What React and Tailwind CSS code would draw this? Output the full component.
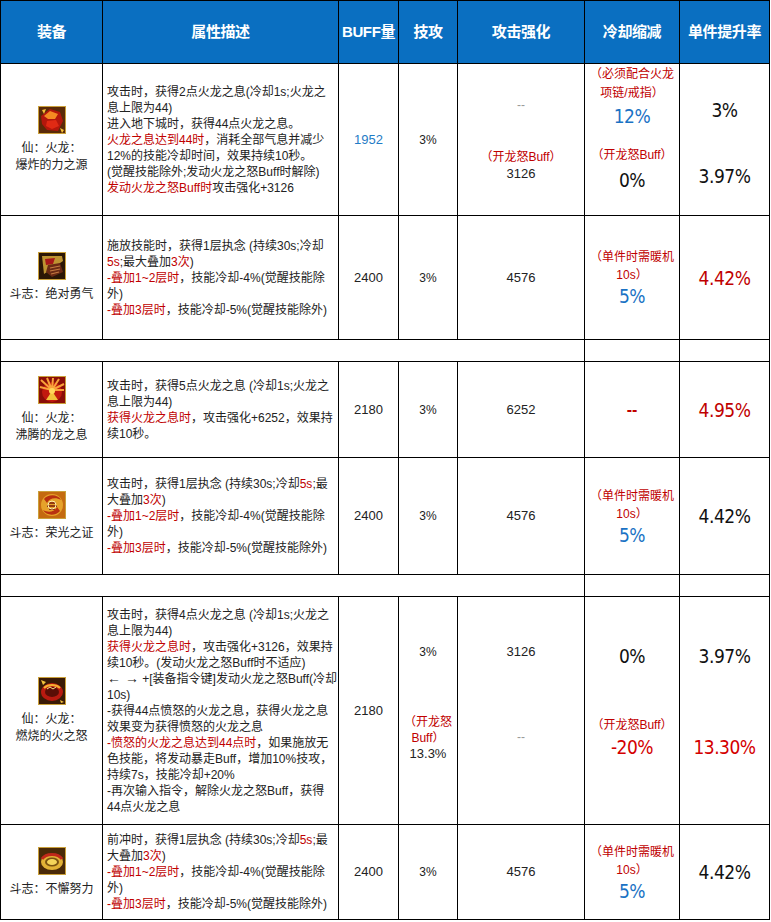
import React from 'react'

const FONT = { fontFamily: '"Liberation Sans","Noto Sans CJK SC",sans-serif' }
const BIG = 'font-[family-name:"DejaVu_Sans_Condensed","Liberation_Sans",sans-serif] text-[19px] leading-[22px] h-[22px] tracking-[-0.5px]'
const COLS = 'grid grid-cols-[102px_236px_60px_59px_127px_95px_90px]'
const CELL = 'border-r border-b border-black flex flex-col items-center justify-center text-center'

function R({ children }) {
  return <span className="text-[#c00000]">{children}</span>
}

function Desc({ lines }) {
  return (
    <div className="border-r border-b border-black flex flex-col justify-center pl-[4px] text-[12px] leading-[16px] text-[#222] overflow-hidden">
      {lines.map((l, i) => (
        <div key={i} className="whitespace-nowrap h-[16px]">{l}</div>
      ))}
    </div>
  )
}

function Frame({ children, bg }) {
  return (
    <svg width="28" height="28" viewBox="0 0 28 28" className="mb-[6px]">
      <rect width="28" height="28" fill={bg} />
      {children}
      <rect x="0.5" y="0.5" width="27" height="27" fill="none" stroke="#caa03a" />
    </svg>
  )
}

function IconBlast() {
  return (
    <Frame bg="#5a2a08">
      <path d="M3 10 L12 3 L22 6 L25 15 L20 25 L9 24 L4 18 Z" fill="#b3170c" />
      <path d="M6 10 L12 5 L20 8 L17 13 L10 13 Z" fill="#f58a22" />
      <path d="M9 15 L18 14 L21 20 L14 23 L8 20 Z" fill="#e02a14" />
      <path d="M4 4 L8 3 L6 8 Z M22 22 L26 24 L24 27 Z" fill="#f7c13a" />
    </Frame>
  )
}

function IconCourage() {
  return (
    <Frame bg="#2b1605">
      <path d="M4 4 L24 4 L25 9 L6 22 Z" fill="#d8a93a" opacity="0.85" />
      <path d="M7 7 L17 6 L15 12 L8 13 Z" fill="#a81818" />
      <path d="M10 13 L22 11 L25 20 L14 25 L8 20 Z" fill="#6b2a14" />
      <path d="M12 16 L22 14 M12 19 L22 17 M13 22 L21 20" stroke="#c47a40" strokeWidth="1.2" />
    </Frame>
  )
}

function IconBreath() {
  return (
    <Frame bg="#8a0e08">
      <circle cx="14" cy="16" r="10" fill="#c21a0e" />
      <path d="M14 14 L3 4 M14 14 L9 2 M14 14 L15 2 M14 14 L21 3 M14 14 L26 8 M14 14 L2 11 M14 14 L26 14" stroke="#f9a23a" strokeWidth="2" />
      <path d="M8 24 L14 15 L20 24 Z" fill="#f2c23c" />
      <circle cx="14" cy="15" r="3" fill="#ffd65a" />
    </Frame>
  )
}

function IconGlory() {
  return (
    <Frame bg="#c46a10">
      <circle cx="14" cy="14" r="11" fill="#e6a22a" />
      <path d="M6 8 C10 3 20 3 23 9 C18 6 11 7 9 12 Z" fill="#b83010" />
      <path d="M22 20 C18 25 8 25 5 19 C10 22 17 21 19 16 Z" fill="#b83010" />
      <path d="M10 12 L18 12 M9 15 L19 15 M11 18 L17 18" stroke="#7a1a08" strokeWidth="1.5" />
      <circle cx="14" cy="14" r="4" fill="none" stroke="#fff2b0" strokeWidth="1" />
    </Frame>
  )
}

function IconRage() {
  return (
    <Frame bg="#3a1a06">
      <ellipse cx="14" cy="15" rx="11" ry="9" fill="#b81a10" />
      <ellipse cx="14" cy="15" rx="7" ry="5" fill="#5a0e06" />
      <path d="M6 11 C10 7 18 7 22 11" stroke="#f6b030" strokeWidth="2" fill="none" />
      <path d="M9 12 L12 10 L15 12 L18 10" stroke="#ffe08a" strokeWidth="1" fill="none" />
      <path d="M3 3 L8 5 L5 8 Z M22 23 L26 25 L23 26 Z" fill="#f2c23c" />
    </Frame>
  )
}

function IconEffort() {
  return (
    <Frame bg="#4a2a08">
      <ellipse cx="14" cy="15" rx="11" ry="8" fill="#e2b236" />
      <ellipse cx="14" cy="15" rx="7" ry="4.5" fill="#7a5210" />
      <path d="M4 12 C8 6 20 6 24 12" stroke="#c0281a" strokeWidth="3" fill="none" />
      <ellipse cx="14" cy="15" rx="5" ry="3" fill="#f4d45a" />
    </Frame>
  )
}

function Name({ icon, lines }) {
  return (
    <div className={CELL + ' text-[12px] leading-[17px] text-[#222]'}>
      {icon}
      {lines.map((l) => (
        <div key={l} className="whitespace-nowrap">{l}</div>
      ))}
    </div>
  )
}

function Val({ children, className = 'text-[13px] text-[#222]' }) {
  return <div className={CELL + ' ' + className}>{children}</div>
}

const dash = <span className="text-[#c00000]">-</span>

export default function App() {
  return (
    <div className="w-[771px] h-[922px] bg-white overflow-hidden" style={FONT}>
      <div className="w-[770px] border-l border-t border-black">
        <div className={COLS + ' h-[63px] bg-[#0a6fc1] text-white font-bold text-[15px]'}>
          {['装备', '属性描述', 'BUFF量', '技攻', '攻击强化', '冷却缩减', '单件提升率'].map((h) => (
            <div key={h} className={CELL + ' whitespace-nowrap tracking-[-0.4px]'}>{h}</div>
          ))}
        </div>

        {/* 爆炸的力之源 */}
        <div className={COLS + ' h-[152px]'}>
          <Name icon={<IconBlast />} lines={['仙：火龙：', '爆炸的力之源']} />
          <Desc
            lines={[
              '攻击时，获得2点火龙之息(冷却1s;火龙之',
              '息上限为44)',
              '进入地下城时，获得44点火龙之息。',
              <><R>火龙之息达到44时</R>，消耗全部气息并减少</>,
              '12%的技能冷却时间，效果持续10秒。',
              '(觉醒技能除外;发动火龙之怒Buff时解除)',
              <><R>发动火龙之怒Buff时</R>攻击强化+3126</>,
            ]}
          />
          <Val className="text-[13px] text-[#1f7cc6]">1952</Val>
          <Val className="text-[12px] text-[#222]">3%</Val>
          <div className={CELL + ' !justify-start pt-[33px] text-[12px] leading-[16px]'}>
            <div className="text-[#999]">--</div>
            <div className="mt-[36px] text-[#c00000]">（开龙怒Buff）</div>
            <div className="text-[13px] leading-[18px] text-[#222]">3126</div>
          </div>
          <div className={CELL + ' !justify-start pt-[1px] text-[12px] leading-[19px] text-[#c00000]'}>
            <div className="whitespace-nowrap">（必须配合火龙</div>
            <div className="whitespace-nowrap">项链/戒指）</div>
            <div className={BIG + ' mt-[2px] text-[#1a72c4]'}>12%</div>
            <div className="mt-[20px] leading-[16px] whitespace-nowrap">（开龙怒Buff）</div>
            <div className={BIG + ' mt-[6px] text-[#111]'}>0%</div>
          </div>
          <div className={CELL + ' !justify-start pt-[35px] text-[#111]'}>
            <div className={BIG}>3%</div>
            <div className={BIG + ' mt-[44px]'}>3.97%</div>
          </div>
        </div>

        {/* 绝对勇气 */}
        <div className={COLS + ' h-[124px]'}>
          <Name icon={<IconCourage />} lines={['斗志：绝对勇气']} />
          <Desc
            lines={[
              '施放技能时，获得1层执念 (持续30s;冷却',
              <><R>5s</R>;最大叠加<R>3次</R>)</>,
              <>{dash}<R>叠加1~2层时</R>，技能冷却-4%(觉醒技能除</>,
              '外)',
              <>{dash}<R>叠加3层时</R>，技能冷却-5%(觉醒技能除外)</>,
            ]}
          />
          <Val>2400</Val>
          <Val className="text-[12px] text-[#222]">3%</Val>
          <Val>4576</Val>
          <Cool />
          <Val className="text-[#c00000]"><div className={BIG}>4.42%</div></Val>
        </div>

        <Spacer />

        {/* 沸腾的龙之息 */}
        <div className={COLS + ' h-[96px]'}>
          <Name icon={<IconBreath />} lines={['仙：火龙：', '沸腾的龙之息']} />
          <Desc
            lines={[
              '攻击时，获得5点火龙之息 (冷却1s;火龙之',
              '息上限为44)',
              <><R>获得火龙之息时</R>，攻击强化+6252，效果持</>,
              '续10秒。',
            ]}
          />
          <Val>2180</Val>
          <Val className="text-[12px] text-[#222]">3%</Val>
          <Val>6252</Val>
          <Val className="text-[#c00000] font-bold text-[16px]">--</Val>
          <Val className="text-[#c00000]"><div className={BIG}>4.95%</div></Val>
        </div>

        {/* 荣光之证 */}
        <div className={COLS + ' h-[117px]'}>
          <Name icon={<IconGlory />} lines={['斗志：荣光之证']} />
          <Desc
            lines={[
              <>攻击时，获得1层执念 (持续30s;冷却<R>5s</R>;最</>,
              <>大叠加<R>3次</R>)</>,
              <>{dash}<R>叠加1~2层时</R>，技能冷却-4%(觉醒技能除</>,
              '外)',
              <>{dash}<R>叠加3层时</R>，技能冷却-5%(觉醒技能除外)</>,
            ]}
          />
          <Val>2400</Val>
          <Val className="text-[12px] text-[#222]">3%</Val>
          <Val>4576</Val>
          <Cool />
          <Val className="text-[#111]"><div className={BIG}>4.42%</div></Val>
        </div>

        <Spacer />

        {/* 燃烧的火之怒 */}
        <div className={COLS + ' h-[228px]'}>
          <Name icon={<IconRage />} lines={['仙：火龙：', '燃烧的火之怒']} />
          <Desc
            lines={[
              '攻击时，获得4点火龙之息 (冷却1s;火龙之',
              '息上限为44)',
              <><R>获得火龙之息时</R>，攻击强化+3126，效果持</>,
              '续10秒。(发动火龙之怒Buff时不适应)',
              <><span className="text-[14px] leading-[14px]">← →</span> +[装备指令键]发动火龙之怒Buff(冷却</>,
              '10s)',
              '-获得44点愤怒的火龙之息，获得火龙之息',
              '效果变为获得愤怒的火龙之息',
              <><R>-愤怒的火龙之息达到44点时</R>，如果施放无</>,
              '色技能，将发动暴走Buff，增加10%技攻，',
              '持续7s，技能冷却+20%',
              '-再次输入指令，解除火龙之怒Buff，获得',
              '44点火龙之息',
            ]}
          />
          <Val>2180</Val>
          <div className={CELL + ' !justify-start pt-[47px] text-[12px] leading-[16px] text-[#222]'}>
            <div>3%</div>
            <div className="mt-[54px] text-[#c00000]">（开龙怒</div>
            <div className="text-[#c00000]">Buff）</div>
            <div className="text-[13px]">13.3%</div>
          </div>
          <div className={CELL + ' !justify-start pt-[47px] text-[13px] leading-[16px] text-[#222]'}>
            <div>3126</div>
            <div className="mt-[69px] text-[12px] text-[#999]">--</div>
          </div>
          <div className={CELL + ' !justify-start pt-[48px] text-[12px] leading-[16px]'}>
            <div className={BIG + ' text-[#111]'}>0%</div>
            <div className="mt-[50px] text-[#c00000] whitespace-nowrap">（开龙怒Buff）</div>
            <div className={BIG + ' mt-[3px] text-[#d40000]'}>-20%</div>
          </div>
          <div className={CELL + ' !justify-start pt-[48px]'}>
            <div className={BIG + ' text-[#111]'}>3.97%</div>
            <div className={BIG + ' mt-[69px] text-[#d40000]'}>13.30%</div>
          </div>
        </div>

        {/* 不懈努力 */}
        <div className={COLS + ' h-[95px]'}>
          <Name icon={<IconEffort />} lines={['斗志：不懈努力']} />
          <Desc
            lines={[
              <>前冲时，获得1层执念 (持续30s;冷却<R>5s</R>;最</>,
              <>大叠加<R>3次</R>)</>,
              <>{dash}<R>叠加1~2层时</R>，技能冷却-4%(觉醒技能除</>,
              '外)',
              <>{dash}<R>叠加3层时</R>，技能冷却-5%(觉醒技能除外)</>,
            ]}
          />
          <Val>2400</Val>
          <Val className="text-[12px] text-[#222]">3%</Val>
          <Val>4576</Val>
          <Cool />
          <Val className="text-[#111]"><div className={BIG}>4.42%</div></Val>
        </div>
      </div>
    </div>
  )
}

function Cool() {
  return (
    <div className={CELL + ' text-[12px] leading-[18px] text-[#c00000]'}>
      <div className="whitespace-nowrap">（单件时需暖机</div>
      <div className="whitespace-nowrap">10s）</div>
      <div className={BIG + ' mt-[1px] text-[#1a72c4]'}>5%</div>
    </div>
  )
}

function Spacer() {
  return (
    <div className="grid grid-cols-[584px_95px_90px] h-[22px]">
      <div className="border-r border-b border-black" />
      <div className="border-r border-b border-black" />
      <div className="border-r border-b border-black" />
    </div>
  )
}
